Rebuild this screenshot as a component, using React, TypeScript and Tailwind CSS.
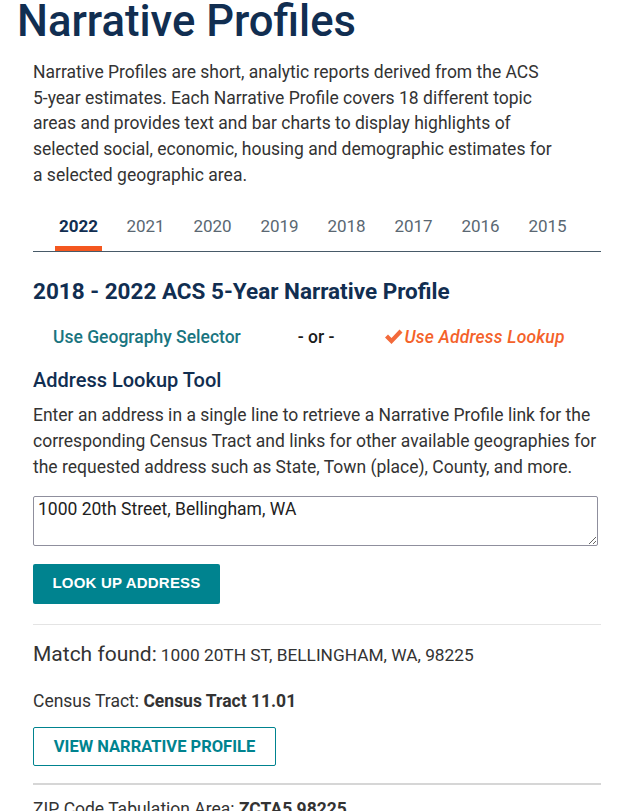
import React from "react";

const years = ["2022", "2021", "2020", "2019", "2018", "2017", "2016", "2015"];

export default function App() {
  return (
    <div className="w-[634px] h-[811px] overflow-hidden bg-white" style={{ fontFamily: "Roboto, 'Liberation Sans', sans-serif" }}>
      <div className="pl-[17px]">
        <h1 className="text-[43.6px] leading-[45px] font-medium text-[#112e51] mt-[-1px]">Narrative Profiles</h1>
      </div>
      <div className="pl-[33px] w-[601px]">
        <p className="mt-[16px] w-[520px] text-[17.5px] leading-[25.7px] text-[#333333]">
          Narrative Profiles are short, analytic reports derived from the ACS <span className="whitespace-nowrap">5-year</span> estimates. Each Narrative Profile covers 18 different topic areas and provides text and bar charts to display highlights of selected social, economic, housing and demographic estimates for a selected geographic area.
        </p>

        <div className="mt-[23px] flex border-b-[1.5px] border-[#475a68] pl-[12px]">
          {years.map((y, i) => (
            <div key={y} className="w-[67px] flex flex-col items-center">
              <span className={i === 0 ? "text-[17px] leading-[28px] font-bold text-[#112e51]" : "text-[17px] leading-[28px] text-[#5a6772]"}>{y}</span>
              <div className={i === 0 ? "mt-[6px] w-[47px] h-[5px] bg-[#f4571f]" : "mt-[6px] w-[47px] h-[5px]"} />
            </div>
          ))}
        </div>

        <h2 className="mt-[25px] text-[22.5px] leading-[28px] font-bold text-[#112e51]">2018 - 2022 ACS 5-Year Narrative Profile</h2>

        <div className="mt-[20px] flex items-center text-[17.5px] leading-[24px]">
          <span className="ml-[20px] font-medium text-[#1a7580]">Use Geography Selector</span>
          <span className="ml-[57px] font-medium text-[#1b1b1b]">- or -</span>
          <span className="ml-[49px] flex items-center font-medium italic text-[#f4622a] tracking-[0.2px]">
            <svg width="19" height="17" viewBox="0 0 19 17" className="mr-[2px]">
              <path d="M1 9.5 L4 6.5 L7.5 10 L15.5 1.5 L18.5 4.5 L7.5 16 Z" fill="#f36a3b" />
            </svg>
            Use Address Lookup
          </span>
        </div>

        <h3 className="mt-[17px] text-[20px] leading-[28px] font-medium text-[#112e51]">Address Lookup Tool</h3>
        <p className="mt-[8px] text-[17.5px] leading-[26px] text-[#333333]">
          Enter an address in a single line to retrieve a Narrative Profile link for the corresponding Census Tract and links for other available geographies for the requested address such as State, Town (place), County, and more.
        </p>

        <textarea
          className="mt-[16px] block w-[565px] h-[50px] border border-[#8f8f9d] rounded-[2px] px-[4px] py-[1px] text-[17.5px] leading-[22px] text-[#222222] resize-y"
          style={{ fontFamily: "Roboto, sans-serif" }}
          defaultValue="1000 20th Street, Bellingham, WA"
        />

        <button className="mt-[18px] block w-[187px] h-[40px] rounded-[2px] bg-[#00838f] text-white text-[15px] font-bold tracking-[0.2px]" style={{ fontFamily: "'Liberation Sans', Arial, sans-serif" }}>
          LOOK UP ADDRESS
        </button>

        <div className="mt-[20px] h-px bg-[#e4e4e4]" />

        <div className="mt-[15px] flex items-baseline text-[#333333]">
          <span className="text-[21px] leading-[28px]">Match found:</span>
          <span className="ml-[4px] text-[17.3px]">1000 20TH ST, BELLINGHAM, WA, 98225</span>
        </div>

        <div className="mt-[22px] text-[17.5px] leading-[22px] text-[#333333]">
          Census Tract: <span className="font-bold">Census Tract 11.01</span>
        </div>

        <button className="mt-[15px] block w-[243px] h-[39px] rounded-[2px] border-[1.5px] border-[#00838f] text-[#00838f] text-[16.5px] font-bold bg-white">
          VIEW NARRATIVE PROFILE
        </button>

        <div className="mt-[17px] h-[2px] bg-[#d6d6d6]" />

        <div className="mt-[13px] text-[17.5px] leading-[22px] text-[#333333]">
          ZIP Code Tabulation Area: <span className="font-bold">ZCTA5 98225</span>
        </div>
      </div>
    </div>
  );
}
